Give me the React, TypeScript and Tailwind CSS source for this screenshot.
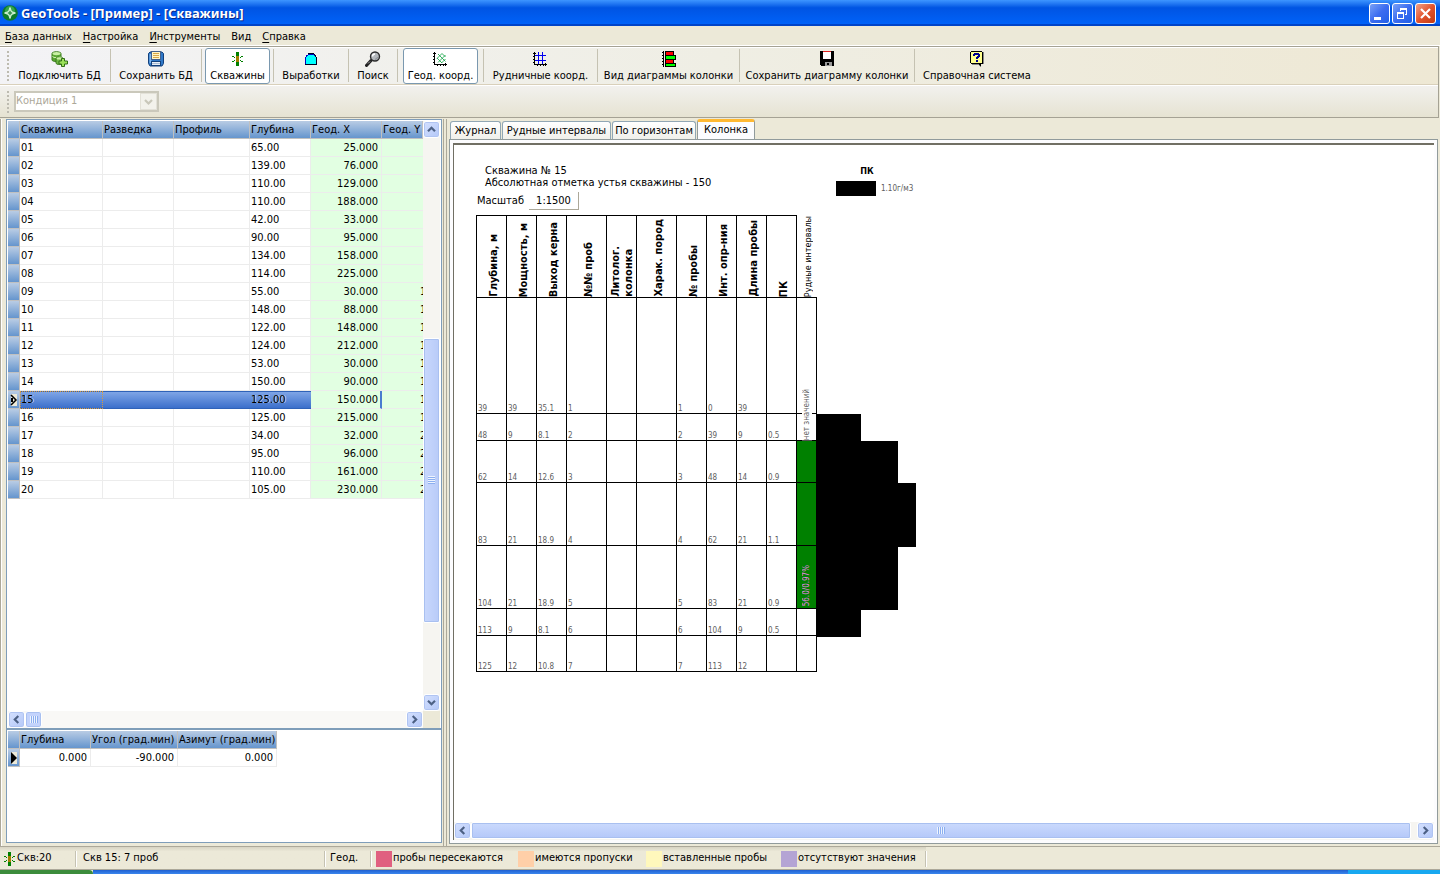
import React from "react";

type Well = { id: string; depth: string; x: string; y: string };

const wells: Well[] = [
  { id: "01", depth: "65.00", x: "25.000", y: "" },
  { id: "02", depth: "139.00", x: "76.000", y: "" },
  { id: "03", depth: "110.00", x: "129.000", y: "" },
  { id: "04", depth: "110.00", x: "188.000", y: "" },
  { id: "05", depth: "42.00", x: "33.000", y: "" },
  { id: "06", depth: "90.00", x: "95.000", y: "" },
  { id: "07", depth: "134.00", x: "158.000", y: "" },
  { id: "08", depth: "114.00", x: "225.000", y: "" },
  { id: "09", depth: "55.00", x: "30.000", y: "1" },
  { id: "10", depth: "148.00", x: "88.000", y: "1" },
  { id: "11", depth: "122.00", x: "148.000", y: "1" },
  { id: "12", depth: "124.00", x: "212.000", y: "1" },
  { id: "13", depth: "53.00", x: "30.000", y: "1" },
  { id: "14", depth: "150.00", x: "90.000", y: "1" },
  { id: "15", depth: "125.00", x: "150.000", y: "1" },
  { id: "16", depth: "125.00", x: "215.000", y: "1" },
  { id: "17", depth: "34.00", x: "32.000", y: "2" },
  { id: "18", depth: "95.00", x: "96.000", y: "2" },
  { id: "19", depth: "110.00", x: "161.000", y: "2" },
  { id: "20", depth: "105.00", x: "230.000", y: "2" },
];

const HEAD = "h-[18px] border-r border-b border-[#c0c0c0] bg-linear-to-b from-[#b9cce4] to-[#6595cd] p-0 pt-px pl-px text-left leading-[16px] font-normal whitespace-nowrap";
const GUTTER = "h-[18px] border-r border-b border-[#c0c0c0] bg-linear-to-b from-[#b9cce4] to-[#6595cd] p-0";
const CELL = "h-[18px] border-r border-b border-[#ececec] p-0 pl-px";

/* ---------- icons ---------- */

function DbAddIcon() {
  return (
    <svg width="17" height="16" viewBox="0 0 17 16">
      <path d="M1 2.5C1 .2 10 .2 10 2.5V9c0 2-9 2-9 0z" fill="#5aa832" stroke="#3c7a1e" />
      <ellipse cx="5.5" cy="2.6" rx="4" ry="1.6" fill="#c9efa4" />
      <path d="M1.5 5.5c1 1.6 7 1.6 8 0" stroke="#d6f5b8" fill="none" />
      <path d="M5 7.500c0-2 7-2 7 0V12c0 2-7 2-7 0z" fill="#6fb944" stroke="#3c7a1e" />
      <ellipse cx="8.500" cy="7.400" rx="3" ry="1.200" fill="#c9efa4" />
      <path d="M10.500 7.500h3v2.500h3v3h-3v2.500h-3V13H8v-3h2.500z" fill="#9be05a" stroke="#2f6d14" />
    </svg>
  );
}

function SaveDbIcon() {
  return (
    <svg width="16" height="16" viewBox="0 0 16 16">
      <path d="M.5 2.500L2 1h12l1.500 1.500v10L14 15H2L.5 12.500z" fill="#2f78c8" stroke="#12407c" />
      <path d="M1.500 3h2v9h-2z" fill="#7fb6ee" />
      <rect x="3.500" y=".5" width="9" height="8" fill="#fff6c8" stroke="#44618a" />
      <path d="M5 2.500h6M5 4.500h6M5 6.500h6" stroke="#d8a848" />
      <rect x="3.500" y="10.500" width="9" height="4" fill="#e8eef6" stroke="#12407c" />
      <path d="M4 12.500h8" stroke="#a9bbd2" />
    </svg>
  );
}

function WellIcon() {
  return (
    <svg width="16" height="16" viewBox="0 0 16 16" shapeRendering="crispEdges" className="shrink-0">
      <path d="M7 1h3v14H7z" fill="#008000" />
      <path d="M7 5h3v6H7z" fill="#a08000" />
      <path d="M3 5h2v1H3zM5 6h1v1H5zM3 10h2v1H3zM5 9h1v1H5zM12 5h2v1h-2zM11 6h1v1h-1zM12 10h2v1h-2zM11 9h1v1h-1z" fill="#008000" />
    </svg>
  );
}

function MineIcon() {
  return (
    <svg width="16" height="16" viewBox="0 0 16 16" shapeRendering="crispEdges">
      <path d="M2 14V6h1V4h2V3h6v1h1v1h1v1h1v8z" fill="#00ffff" />
      <path d="M2 14V6h1V4h2V2h6v2h1v1h1v1h1v1h-1V6h-1V5h-1V4H5v1H4v1H3v8z" fill="#0000c0" />
      <path d="M2 13h12v1H2zM13 6h1v8h-1zM5 2h6v1H5zM11 3h1v1h-1zM12 4h1v2h-1z" fill="#000020" />
    </svg>
  );
}

function SearchIcon() {
  return (
    <svg width="16" height="16" viewBox="0 0 16 16">
      <path d="M1.500 14.500L6 9.500" stroke="#222" strokeWidth="3" strokeLinecap="round" />
      <path d="M3 12.500l2-2" stroke="#aaa" />
      <circle cx="10" cy="5.500" r="4.500" fill="#b4b8bc" stroke="#2c2c2c" strokeWidth="1.400" />
      <path d="M7.500 5.500a2.500 2.500 0 012.500-2.500" stroke="#fff" strokeWidth="1.500" fill="none" />
      <path d="M12.500 6a2.500 2.500 0 01-2.500 2.300" stroke="#858a90" fill="none" />
    </svg>
  );
}

const AXES = "M2 1h1v12H2zM1 2h3v1H1zM2 13h13v1H2zM13 12h1v3h-1zM1 5h1v1H1zM1 8h1v1H1zM1 11h1v1H1zM5 14h1v1H5zM8 14h1v1H8zM11 14h1v1h-1z";

function GeoIcon() {
  return (
    <svg width="16" height="16" viewBox="0 0 16 16">
      <path d="M6 3l7.500 7.500M5 7l5 5M6 11.500L13.500 4M5 7.500L10 2.500M10 2.500l3.500 3.500M9.500 12l4-4" stroke="#20a850" strokeWidth=".9" fill="none" />
      <path d={AXES} fill="#000" shapeRendering="crispEdges" />
    </svg>
  );
}

function GridIcon() {
  return (
    <svg width="16" height="16" viewBox="0 0 16 16" shapeRendering="crispEdges">
      <path d="M6 1h1v12H6zM10 1h1v12h-1zM3 4h11v1H3zM3 9h11v1H3z" fill="#0000f0" />
      <path d={AXES} fill="#000" />
    </svg>
  );
}

function DiagramIcon() {
  return (
    <svg width="16" height="16" viewBox="0 0 16 16" shapeRendering="crispEdges">
      <path d="M4 0h9v4h2v5h-2v3h2v4H4z" fill="#000" />
      <path d="M5 1h7v3H5zM5 9h7v3H5z" fill="#ff0000" />
      <path d="M5 5h9v3H5zM5 13h9v2H5z" fill="#00ff00" />
      <path d="M2 0h1v16H2zM1 1h1v1H1zM1 4h1v1H1zM1 7h1v1H1zM1 10h1v1H1zM1 13h1v1H1z" fill="#000" />
    </svg>
  );
}

function FloppyIcon() {
  return (
    <svg width="16" height="16" viewBox="0 0 16 16" shapeRendering="crispEdges">
      <path d="M1 0h14v15H2l-1-1z" fill="#000" />
      <path d="M4 1h8v7H4z" fill="#fff" />
      <path d="M4 0h8v1H4z" fill="#e02020" />
      <path d="M6 11h7v4H6z" fill="#9a9a9a" />
      <path d="M8 12h2v2H8z" fill="#000" />
    </svg>
  );
}

function HelpIcon() {
  return (
    <svg width="16" height="16" viewBox="0 0 16 16" shapeRendering="crispEdges">
      <path d="M3 1h12v12h-3v3h-1l-2-2H3z" fill="#888" />
      <path d="M2 0h11v1h1v12h-2v2h-1l-2-2H2v-1H1V1h1z" fill="#000" />
      <path d="M2 1h11v11H2z" fill="#ffff90" />
      <path d="M4 5V3h1V2h5v1h1v3h-1v1H9v1H7V6h1V5h1V4H6v1zM7 9h2v2H7z" fill="#000090" />
    </svg>
  );
}

function Chevron({ turn }: { turn: string }) {
  return (
    <svg width="9" height="9" viewBox="0 0 9 9" className={turn}>
      <path d="M1 6.300L4.500 2.800L8 6.300" stroke="#4d6185" strokeWidth="2.200" fill="none" />
    </svg>
  );
}

/* ---------- scroll bars ---------- */

function ScrollButton({ label, turn }: { label: string; turn: string }) {
  return (
    <button
      type="button"
      aria-label={label}
      className="flex size-[17px] shrink-0 items-center justify-center rounded-[3px] border border-white bg-linear-to-br from-[#d4e0fe] to-[#b4c8f8] shadow-[inset_0_0_0_1px_#b0c4f2]"
    >
      <Chevron turn={turn} />
    </button>
  );
}

function GripV() {
  return (
    <span className="flex flex-col">
      {[0, 1, 2, 3].map((i) => (
        <span key={i} className="h-[2px] w-[7px] border-b border-[#8caff0] bg-[#eef4fe]" />
      ))}
    </span>
  );
}

function GripH() {
  return (
    <span className="flex">
      {[0, 1, 2, 3].map((i) => (
        <span key={i} className="h-[7px] w-[2px] border-r border-[#8caff0] bg-[#eef4fe]" />
      ))}
    </span>
  );
}

/* ---------- toolbar ---------- */

type ToolProps = { width: string; label: string; icon: React.ReactNode; active?: boolean; last?: boolean };

function Tool({ width, label, icon, active, last }: ToolProps) {
  return (
    <div className={`flex shrink-0 items-center justify-center ${width}`}>
      <div className="flex flex-1 justify-center">
        <button
          type="button"
          className={`flex h-9 flex-col items-center gap-[2px] rounded-[3px] border px-1 pt-[2px] whitespace-nowrap ${
            active ? "border-[#7a98af] bg-white" : "border-transparent"
          }`}
        >
          {icon}
          <span className="leading-[13px]">{label}</span>
        </button>
      </div>
      {!last && <span className="h-[33px] w-px bg-[#c5c2b2]" />}
    </div>
  );
}

function DotGrip({ dots }: { dots: number }) {
  return (
    <span className="flex w-[2px] shrink-0 flex-col gap-[2px]">
      {Array.from({ length: dots }, (_, i) => (
        <span key={i} className="size-[2px] bg-[#bdbbb0]" />
      ))}
    </span>
  );
}

function Toolbars() {
  return (
    <div className="mr-px border-y border-r border-[#a5a294]">
      <div className="flex h-[38px] items-center border-b border-[#d9d0bb] bg-linear-to-r from-[#f3f3f6] via-[#efeee4] to-[#eee8d4] pl-[7px] shadow-[inset_0_1px_0_#ffffff]">
        <DotGrip dots={8} />
        <div className="flex">
          <Tool width="w-[102px]" label="Подключить БД" icon={<DbAddIcon />} />
          <Tool width="w-[91px]" label="Сохранить БД" icon={<SaveDbIcon />} />
          <Tool width="w-[72px]" label="Скважины" icon={<WellIcon />} active />
          <Tool width="w-[75px]" label="Выработки" icon={<MineIcon />} />
          <Tool width="w-[49px]" label="Поиск" icon={<SearchIcon />} />
          <Tool width="w-[86px]" label="Геод. коорд." icon={<GeoIcon />} active />
          <Tool width="w-[114px]" label="Рудничные коорд." icon={<GridIcon />} />
          <Tool width="w-[142px]" label="Вид диаграммы колонки" icon={<DiagramIcon />} />
          <Tool width="w-[175px]" label="Сохранить диаграмму колонки" icon={<FloppyIcon />} />
          <Tool width="w-[124px]" label="Справочная система" icon={<HelpIcon />} last />
        </div>
      </div>
      <div className="flex h-8 items-center gap-[5px] border-t border-white bg-linear-to-b from-[#f2f1ee] to-[#e6e3d2] pl-[7px]">
        <DotGrip dots={6} />
        <div className="mb-px flex h-[21px] w-[145px] items-center border-2 border-[#cac8bb] bg-white">
          <select
            disabled
            aria-label="Кондиция"
            className="h-full min-w-0 flex-1 appearance-none bg-white text-[#aca899] opacity-100"
          >
            <option>Кондиция 1</option>
          </select>
          <span className="flex h-full w-[17px] items-center justify-center border border-[#e3e1d8] bg-[#f3f2ec]">
            <svg width="9" height="9" viewBox="0 0 9 9">
              <path d="M1 3L4.500 6.500L8 3" stroke="#c9c7ba" strokeWidth="2.200" fill="none" />
            </svg>
          </span>
        </div>
      </div>
    </div>
  );
}

/* ---------- title bar and menu ---------- */

function TitleBar() {
  return (
    <header className="flex h-[26px] items-center bg-linear-to-b from-[#3d95ff] via-[#0054e3] via-30% to-[#0064fb] pr-1 pl-[2px] shadow-[inset_0_-2px_0_#0044c8]">
      <svg width="16" height="16" viewBox="0 0 16 16">
        <circle cx="8" cy="8" r="7.800" fill="#0d7a2a" />
        <circle cx="8" cy="6" r="5" fill="#35a54c" />
        <path d="M8 2.500L9.500 6.500L13.500 8L9.500 9.500L8 13.500L6.500 9.500L2.500 8L6.500 6.500z" fill="#a6dfae" stroke="#f1fff2" strokeWidth=".8" />
        <path d="M8 6v4M6 8h4" stroke="#1a7a30" />
      </svg>
      <h1 className="ml-[3px] flex-1 pt-px font-['Noto_Sans',sans-serif] text-[13px] font-bold whitespace-nowrap text-white [text-shadow:1px_1px_0_#0a2a8a]">
        GeoTools - [Пример] - [Скважины]
      </h1>
      <div className="flex gap-[2px]">
        <button type="button" aria-label="Свернуть" className="size-[21px] rounded-[3px] border border-white bg-linear-to-br from-[#7aa0f6] via-[#3c6cf0] to-[#1f5fe8]">
          <svg width="19" height="19" viewBox="0 0 19 19">
            <path d="M4 13h7v3H4z" fill="#fff" />
          </svg>
        </button>
        <button type="button" aria-label="Восстановить" className="size-[21px] rounded-[3px] border border-white bg-linear-to-br from-[#7aa0f6] via-[#3c6cf0] to-[#1f5fe8]">
          <svg width="19" height="19" viewBox="0 0 19 19" shapeRendering="crispEdges">
            <path d="M7 4h7v7h-2v-1h1V6H8v1H7zM4 8h7v7H4zM5 10v4h5v-4z" fill="#fff" fillRule="evenodd" />
          </svg>
        </button>
        <button type="button" aria-label="Закрыть" className="size-[21px] rounded-[3px] border border-white bg-linear-to-br from-[#f0a088] via-[#e2532c] to-[#c03a10]">
          <svg width="19" height="19" viewBox="0 0 19 19">
            <path d="M5 5l9 9M14 5l-9 9" stroke="#fff" strokeWidth="2.200" />
          </svg>
        </button>
      </div>
    </header>
  );
}

function MenuItem({ hot, rest }: { hot: string; rest: string }) {
  return (
    <button type="button" className="leading-[13px]">
      <span className="underline underline-offset-2">{hot}</span>
      {rest}
    </button>
  );
}

function MenuBar() {
  return (
    <nav className="flex h-5 items-center gap-[11px] border-b border-white pt-[2px] pl-[5px]">
      <MenuItem hot="Б" rest="аза данных" />
      <MenuItem hot="Н" rest="астройка" />
      <MenuItem hot="И" rest="нструменты" />
      <MenuItem hot="" rest="Вид" />
      <MenuItem hot="С" rest="правка" />
    </nav>
  );
}

/* ---------- left pane ---------- */

function WellTable() {
  return (
    <table className="w-[415px] table-fixed border-separate border-spacing-0">
      <colgroup>
        <col className="w-3" />
        <col className="w-[83px]" />
        <col className="w-[71px]" />
        <col className="w-[76px]" />
        <col className="w-[61px]" />
        <col className="w-[71px]" />
        <col />
      </colgroup>
      <thead>
        <tr>
          <th className={HEAD} aria-label="Строка" />
          <th className={HEAD}>Скважина</th>
          <th className={HEAD}>Разведка</th>
          <th className={HEAD}>Профиль</th>
          <th className={HEAD}>Глубина</th>
          <th className={HEAD}>Геод. X</th>
          <th className={HEAD}>Геод. Y</th>
        </tr>
      </thead>
      <tbody>
        {wells.map((w) => {
          const selected = w.id === "15";
          const cell = selected
            ? "h-[18px] border-y border-[#2f62b8] bg-linear-to-b from-[#7fa5e6] to-[#3b6fcb] p-0 pl-px [text-shadow:1px_0_0_#c8d8f4]"
            : CELL;
          return (
            <tr key={w.id} className="leading-[16px]">
              <td className={GUTTER}>
                {selected && (
                  <svg width="10" height="12" viewBox="0 0 10 12" className="block">
                    <path d="M3 0h6v12H3z" fill="#ece9d8" />
                    <path d="M3 1l5 5l-5 5" stroke="#000" strokeWidth="1.500" fill="none" />
                    <path d="M3 4h2v4H3z" fill="#000" />
                  </svg>
                )}
              </td>
              <td className={selected ? `${cell} outline-1 -outline-offset-1 outline-dotted outline-[#d99a3c]` : cell}>{w.id}</td>
              <td className={cell} />
              <td className={cell} />
              <td className={cell}>{w.depth}</td>
              <td className={`h-[18px] border-b border-[#ececec] bg-[#e2ffe2] p-0 text-right ${selected ? "border-r-2 border-r-[#4a7bd0] pr-[2px]" : "border-r pr-[3px]"}`}>
                {w.x}
              </td>
              <td className="h-[18px] overflow-hidden border-b border-[#ececec] bg-[#e2ffe2] p-0 pl-[38px]">{w.y}</td>
            </tr>
          );
        })}
      </tbody>
    </table>
  );
}

function SurveyTable() {
  return (
    <table className="w-[269px] table-fixed border-separate border-spacing-0">
      <colgroup>
        <col className="w-3" />
        <col className="w-[71px]" />
        <col className="w-[87px]" />
        <col className="w-[99px]" />
      </colgroup>
      <thead>
        <tr>
          <th className={HEAD} aria-label="Строка" />
          <th className={HEAD}>Глубина</th>
          <th className={HEAD}>Угол (град.мин)</th>
          <th className={HEAD}>Азимут (град.мин)</th>
        </tr>
      </thead>
      <tbody>
        <tr className="leading-[16px]">
          <td className={GUTTER}>
            <svg width="10" height="12" viewBox="0 0 10 12" className="block">
              <path d="M3 0h6v12H3z" fill="#ece9d8" />
              <path d="M3 0l6 6l-6 6z" fill="#000" />
            </svg>
          </td>
          <td className={`${CELL} pr-[3px] text-right`}>0.000</td>
          <td className={`${CELL} pr-[3px] text-right`}>-90.000</td>
          <td className={`${CELL} pr-[3px] text-right`}>0.000</td>
        </tr>
      </tbody>
    </table>
  );
}

function LeftPane() {
  return (
    <section className="flex w-[444px] shrink-0 flex-col border-x border-[#aca899] bg-[#ece9d8] pr-px pl-[5px] shadow-[inset_1px_0_0_#ffffff]">
      <div className="flex flex-1 flex-col border border-b-2 border-[#7f9db9] bg-white p-px pb-0">
        <div className="flex flex-1">
          <div className="min-w-0 flex-1 overflow-hidden">
            <WellTable />
          </div>
          <div className="flex w-[17px] shrink-0 flex-col bg-[#f6f5f1]">
            <ScrollButton label="Вверх" turn="" />
            <div className="flex-[200]" />
            <div className="flex flex-[284] items-center justify-center rounded-[2px] border border-white bg-linear-to-r from-[#c9d8fd] to-[#b8cbf8] shadow-[inset_0_0_0_1px_#a9c0f0]">
              <GripV />
            </div>
            <div className="flex-[71]" />
            <ScrollButton label="Вниз" turn="rotate-180" />
          </div>
        </div>
        <div className="flex">
          <div className="flex min-w-0 flex-1 bg-[#f9f8f6]">
            <ScrollButton label="Влево" turn="-rotate-90" />
            <div className="flex size-[17px] items-center justify-center rounded-[3px] border border-white bg-[#c3d3fc] shadow-[inset_0_0_0_1px_#a9c0f0]">
              <GripH />
            </div>
            <div className="flex-1" />
            <ScrollButton label="Вправо" turn="rotate-90" />
          </div>
          <div className="w-[17px] bg-[#ece9d8]" />
        </div>
      </div>
      <div className="h-[113px] border border-t-0 border-[#7f9db9] bg-white p-px">
        <SurveyTable />
      </div>
      <div className="h-[3px]" />
    </section>
  );
}

/* ---------- column diagram ---------- */

const diagramHeads: { width: string; lines: string[] }[] = [
  { width: "w-[31px]", lines: ["Глубина, м"] },
  { width: "w-[30px]", lines: ["Мощность, м"] },
  { width: "w-[30px]", lines: ["Выход керна"] },
  { width: "w-10", lines: ["№№ проб"] },
  { width: "w-[30px]", lines: ["Литолог.", "колонка"] },
  { width: "w-10", lines: ["Харак. пород"] },
  { width: "w-[30px]", lines: ["№ пробы"] },
  { width: "w-[30px]", lines: ["Инт. опр-ния"] },
  { width: "w-[30px]", lines: ["Длина пробы"] },
  { width: "w-[30px]", lines: ["ПК"] },
];

const samples: { height: number; cells: string[]; ore?: boolean }[] = [
  { height: 116, cells: ["39", "39", "35.1", "1", "", "", "1", "0", "39", ""] },
  { height: 27, cells: ["48", "9", "8.1", "2", "", "", "2", "39", "9", "0.5"] },
  { height: 42, cells: ["62", "14", "12.6", "3", "", "", "3", "48", "14", "0.9"], ore: true },
  { height: 63, cells: ["83", "21", "18.9", "4", "", "", "4", "62", "21", "1.1"], ore: true },
  { height: 63, cells: ["104", "21", "18.9", "5", "", "", "5", "83", "21", "0.9"], ore: true },
  { height: 27, cells: ["113", "9", "8.1", "6", "", "", "6", "104", "9", "0.5"] },
  { height: 36, cells: ["125", "12", "10.8", "7", "", "", "7", "113", "12", ""] },
];

const bars = [
  { width: 44, height: 27 },
  { width: 81, height: 42 },
  { width: 99, height: 64 },
  { width: 81, height: 63 },
  { width: 44, height: 27 },
];

const UPWARD = "rotate-180 text-left whitespace-nowrap [text-orientation:sideways] [writing-mode:vertical-rl]";

function Diagram() {
  return (
    <div className="flex">
      <table className="w-[341px] table-fixed border-separate border-spacing-0">
        <thead>
          <tr>
            {diagramHeads.map((h, i) => (
              <th key={i} className={`h-[83px] border-y border-r border-black p-0 align-bottom ${h.width} ${i === 0 ? "border-l" : ""}`}>
                <div className={`flex justify-center ${h.lines.length > 1 ? "" : "pl-1"}`}>
                  <div className={`${UPWARD} text-[11px] leading-[13px] font-bold`}>
                    {h.lines.map((l) => (
                      <div key={l}>{l}</div>
                    ))}
                  </div>
                </div>
              </th>
            ))}
            <th className="w-5 border-b border-black p-0 align-bottom">
              <div className="flex justify-center pl-[2px]">
                <div className={`${UPWARD} text-[9px] leading-[10px] font-normal`}>Рудные интервалы</div>
              </div>
            </th>
          </tr>
        </thead>
        <tbody>
          {samples.map((s, r) => (
            <tr key={r} style={{ height: s.height }}>
              {s.cells.map((c, i) => (
                <td
                  key={i}
                  className={`border-r border-b border-black p-0 pl-px align-bottom text-[8px] leading-[8px] text-[#606060] ${i === 0 ? "border-l" : ""}`}
                >
                  {c}
                </td>
              ))}
              <td className={`relative border-r border-b border-black p-0 text-[8px] leading-[10px] ${s.ore ? "bg-[#008000]" : ""}`}>
                {r === 1 && <div className={`absolute bottom-0 left-[5px] bg-white text-[#606060] ${UPWARD}`}>нет значений</div>}
                {r === 4 && <div className={`absolute bottom-[2px] left-[5px] text-[#ee82ee] ${UPWARD}`}>56.0/0.97%</div>}
              </td>
            </tr>
          ))}
        </tbody>
      </table>
      <div className="pt-[199px]">
        {bars.map((b, i) => (
          <div key={i} className="bg-black" style={{ width: b.width, height: b.height }} />
        ))}
      </div>
    </div>
  );
}

function ColumnSheet() {
  return (
    <div className="flex flex-1 flex-col border-t-2 border-l border-[#716f64] bg-white">
      <div className="flex-1 pt-5 pl-[22px]">
        <div className="flex">
          <div className="w-[360px]">
            <div className="pl-[9px] leading-[12px]">
              <p>Скважина № 15</p>
              <p>Абсолютная отметка устья скважины - 150</p>
            </div>
            <label className="mt-[3px] flex items-center gap-[6px] pl-px">
              <span className="w-[46px]">Масштаб</span>
              <input
                defaultValue="1:1500"
                className="h-[18px] w-[50px] border-r border-b border-[#aca899] bg-white text-center text-[11px] outline-none"
              />
            </label>
          </div>
          <div>
            <p className="w-[62px] text-center text-[9px] leading-[12px] font-bold">ПК</p>
            <div className="mt-1 flex items-center gap-[5px] text-[8px] text-[#606060]">
              <span className="h-[15px] w-10 bg-black" />
              <span>1.10г/м3</span>
            </div>
          </div>
        </div>
        <div className="mt-[5px]">
          <Diagram />
        </div>
      </div>
      <div className="flex bg-[#f6f5f1] pb-px">
        <ScrollButton label="Влево" turn="-rotate-90" />
        <div className="flex flex-1 items-center justify-center rounded-[2px] border border-white bg-linear-to-b from-[#cbdafd] to-[#b4c8f9] shadow-[inset_0_0_0_1px_#a9c0f0]">
          <GripH />
        </div>
        <div className="w-[6px]" />
        <ScrollButton label="Вправо" turn="rotate-90" />
      </div>
    </div>
  );
}

function Tab({ label, width, active }: { label: string; width: string; active?: boolean }) {
  return (
    <button
      type="button"
      role="tab"
      aria-selected={!!active}
      className={
        active
          ? `-mb-px h-[21px] rounded-t-[3px] border border-t-[3px] border-[#919b9c] border-t-[#ffb932] border-b-[#fcfcfe] bg-[#fcfcfe] pb-px whitespace-nowrap ${width}`
          : `h-[18px] rounded-t-[3px] border border-b-0 border-[#91a7b4] bg-linear-to-b from-white to-[#f0f0ea] pt-px whitespace-nowrap ${width}`
      }
    >
      {label}
    </button>
  );
}

function RightPane() {
  return (
    <section className="ml-[2px] flex min-w-0 flex-1 flex-col border-l border-[#aca899] bg-[#ece9d8] pr-[2px] pb-[2px] pl-[2px]">
      <div role="tablist" className="flex h-5 items-end gap-px pl-px">
        <Tab label="Журнал" width="w-[51px]" />
        <Tab label="Рудные интервалы" width="w-[109px]" />
        <Tab label="По горизонтам" width="w-[84px]" />
        <Tab label="Колонка" width="w-[58px]" active />
      </div>
      <div className="flex flex-1 flex-col border border-[#919b9c] bg-[#fcfcfe] p-[3px]">
        <ColumnSheet />
      </div>
    </section>
  );
}

/* ---------- status bar ---------- */

function Legend({ color, label, width }: { color: string; label: string; width: string }) {
  return (
    <div className={`flex items-center gap-px whitespace-nowrap ${width}`}>
      <span className={`size-4 ${color}`} />
      <span>{label}</span>
    </div>
  );
}

function StatusBar() {
  const panel = "flex h-4 items-center border-r border-[#c5c2b2] shadow-[1px_0_0_#ffffff]";
  return (
    <footer>
      <div className="flex h-6 border-t border-b border-[#aca899]">
        <div className="flex items-center bg-linear-to-b from-[#d8d4c4] via-[#ece9d8] via-20% to-[#ece9d8] pt-px">
          <div className={`${panel} w-[76px] pl-px`}>
            <WellIcon />
            <span>Скв:20</span>
          </div>
          <div className={`${panel} w-[249px] pl-[7px]`}>Скв 15: 7 проб</div>
          <div className={`${panel} w-[46px] pl-[5px]`}>Геод.</div>
          <div className={`${panel} pl-[5px]`}>
            <Legend width="w-[142px]" color="bg-[#e06080]" label="пробы пересекаются" />
            <Legend width="w-[128px]" color="bg-[#ffcfa8]" label="имеются пропуски" />
            <Legend width="w-[135px]" color="bg-[#fff8bc]" label="вставленные пробы" />
            <Legend width="w-36" color="bg-[#b4a4d4]" label="отсутствуют значения" />
          </div>
        </div>
      </div>
      <div className="flex h-1">
        <div className="w-[93px] rounded-tr bg-[#3c8c3c]" />
        <div className="flex-1 bg-linear-to-b from-[#1f5fd0] to-[#3a86ee]" />
        <div className="w-[92px] bg-[#18a8f0]" />
      </div>
    </footer>
  );
}

export default function App() {
  return (
    <div className="flex min-h-screen flex-col bg-[#ece9d8] font-['DejaVu_Sans_Condensed','Noto_Sans',sans-serif] text-[11px] text-black">
      <TitleBar />
      <MenuBar />
      <Toolbars />
      <main className="flex flex-1 pt-px">
        <LeftPane />
        <RightPane />
      </main>
      <StatusBar />
    </div>
  );
}
